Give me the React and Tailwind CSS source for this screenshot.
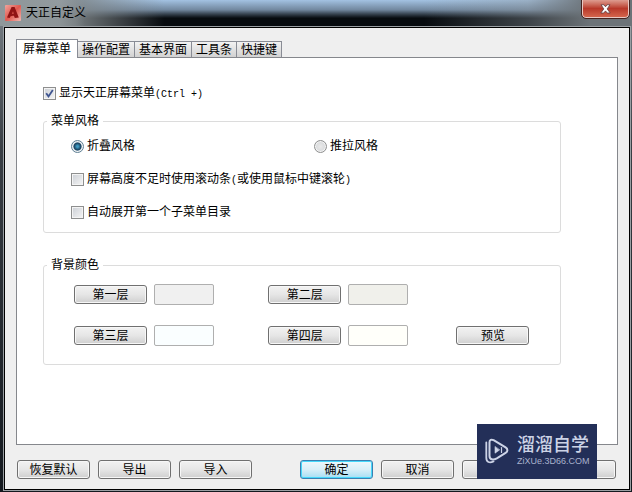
import { useState } from 'react';
import clsx from 'clsx';

const TABS = ['屏幕菜单', '操作配置', '基本界面', '工具条', '快捷键'];

export default function App() {
  const [tab, setTab] = useState(TABS[0]);
  const [showMenu, setShowMenu] = useState(true);
  const [menuStyle, setMenuStyle] = useState('fold');
  const [useScroll, setUseScroll] = useState(false);
  const [autoExpand, setAutoExpand] = useState(false);

  return (
    <div className="relative flex min-h-screen flex-col bg-linear-to-b from-[#7d848a] via-[#3a3f45] via-30% to-[#14191f] font-['Liberation_Sans','Noto_Sans_CJK_SC',sans-serif] text-xs leading-4 text-black">
      <TitleBar />
      <div className="mr-px mb-px ml-[3px] flex flex-1 flex-col border border-[#9a9fa3]">
        <main className="flex flex-1 flex-col border border-black bg-[#efefef] px-[11px] pt-[11px] pb-[10px]">
          <div role="tablist" className="flex items-end">
            {TABS.map((name) => (
              <button
                key={name}
                role="tab"
                aria-selected={tab === name}
                onClick={() => setTab(name)}
                className={clsx(
                  'border-[#898c95] whitespace-nowrap',
                  tab === name
                    ? 'relative z-10 h-[19px] border-t border-r border-l bg-white px-[6px]'
                    : 'h-[17px] border-t border-r border-b bg-linear-to-b from-[#f2f2f2] to-[#d2d2d2] px-1'
                )}
              >
                {name}
              </button>
            ))}
          </div>

          <section className="-mt-px flex-1 border border-[#85878c] bg-white pt-[27px] pr-14 pb-16 pl-[26px]">
            <Check checked={showMenu} onChange={setShowMenu}>
              显示天正屏幕菜单<Mono>(Ctrl +)</Mono>
            </Check>

            <fieldset className="mt-3 rounded-[3px] border border-[#dcdcdc] px-[3px] pb-3">
              <legend className="px-1">菜单风格</legend>
              <div className="flex flex-col gap-[17px] pt-[9px] pl-6">
                <div className="grid grid-cols-2">
                  <Radio value="fold" current={menuStyle} onChange={setMenuStyle}>折叠风格</Radio>
                  <Radio value="slide" current={menuStyle} onChange={setMenuStyle}>推拉风格</Radio>
                </div>
                <Check checked={useScroll} onChange={setUseScroll}>
                  屏幕高度不足时使用滚动条<Mono>(</Mono>或使用鼠标中键滚轮<Mono>)</Mono>
                </Check>
                <Check checked={autoExpand} onChange={setAutoExpand}>自动展开第一个子菜单目录</Check>
              </div>
            </fieldset>

            <fieldset className="mt-6 rounded-[3px] border border-[#dcdcdc] px-[3px] pb-[18px]">
              <legend className="px-1">背景颜色</legend>
              <div className="grid grid-cols-[195fr_189fr_101fr] gap-y-5 pt-[11px] pl-[27px]">
                <Layer label="第一层" color="bg-[#f0f0f0]" />
                <Layer label="第二层" color="bg-[#f0f0eb]" />
                <span />
                <Layer label="第三层" color="bg-[#fafeff]" />
                <Layer label="第四层" color="bg-[#fffffa]" />
                <div className="flex items-center"><Button>预览</Button></div>
              </div>
            </fieldset>
          </section>

          <footer className="flex justify-between pt-[15px] pr-[2px] pl-px">
            <div className="flex gap-2">
              <Button>恢复默认</Button>
              <Button>导出</Button>
              <Button>导入</Button>
            </div>
            <div className="flex gap-2">
              <Button primary>确定</Button>
              <Button>取消</Button>
              <Button aria-label="应用" />
              <Button aria-label="帮助" />
            </div>
          </footer>
        </main>
      </div>
      <Watermark />
    </div>
  );
}

function TitleBar() {
  return (
    <header className="h-[26px] bg-linear-to-b from-[#a3c2e2] via-[#71879e] via-38% to-[#070b0f] to-70%">
      <div className="flex h-full items-start justify-between bg-linear-to-r from-[#7f8689] via-[#7f8689]/90 via-12% to-transparent to-26%">
        <div className="flex h-full flex-1 items-center gap-[5px] bg-linear-to-r from-[#8f979a] via-[#a4abae]/50 via-14% to-transparent to-20% pl-[5px]">
          <Logo />
          <h1>天正自定义</h1>
        </div>
        <div className="flex h-full w-52 justify-end bg-linear-to-r from-transparent via-[#8f989f]/40 to-[#6c7378] to-80% pr-[3px]">
          <button
            aria-label="关闭"
            className="flex h-[18px] w-[47px] items-center justify-center rounded-b-[4px] border border-t-0 border-[#e8c9c4] bg-linear-to-b from-[#dd9c90] via-[#b8382a] via-50% to-[#d4644c] outline outline-[#46231f]"
          >
            <svg width="11" height="10" viewBox="0 0 11 10">
              <path d="M1 .8h3l1.5 2 1.5-2h3L7.2 4.9 10.2 9h-3L5.5 6.9 3.8 9h-3l3-4.1z" fill="#fff" stroke="#5e3a3c" strokeWidth=".8" />
            </svg>
          </button>
        </div>
      </div>
    </header>
  );
}

const Logo = () => (
  <svg width="16" height="16" viewBox="0 0 16 16">
    <defs>
      <linearGradient id="logo" x1="0" y1="0" x2="1" y2="1">
        <stop offset="0" stopColor="#f3a59d" />
        <stop offset=".5" stopColor="#e0584e" />
        <stop offset="1" stopColor="#f3b9b2" />
      </linearGradient>
    </defs>
    <rect width="16" height="16" rx="1" fill="url(#logo)" />
    <path d="M6.600 2h3L13.800 12.400l-4 .6-.9-2.200c-1.400-.4-2.500-.1-3.600.8l-.6 1.400-2.700-.6z" fill="#8f1414" />
    <path d="M8 6.200 8.900 8.900c-.8-.1-1.400 0-2.100.3z" fill="#d9584e" />
  </svg>
);

const Mono = ({ children }) => <span className="font-['Liberation_Mono',monospace] text-[10px] leading-none whitespace-pre">{children}</span>;

const Check = ({ checked, onChange, children }) => (
  <label className="flex h-4 w-fit items-center gap-[3px] whitespace-nowrap">
    <span className="grid">
      <input
        type="checkbox"
        checked={checked}
        onChange={(e) => onChange(e.target.checked)}
        className="peer col-start-1 row-start-1 size-[13px] appearance-none border border-[#8e8f8f] bg-linear-to-br from-[#cbcfd5] to-[#f6f6f6] shadow-[inset_0_0_0_1px_#f4f4f4]"
      />
      <svg viewBox="0 0 13 13" className="pointer-events-none invisible col-start-1 row-start-1 size-[13px] peer-checked:visible">
        <path d="M3.200 6.200 5.500 9.400 9.800 3" fill="none" stroke="#3f5590" strokeWidth="1.800" />
      </svg>
    </span>
    <span>{children}</span>
  </label>
);

const Radio = ({ value, current, onChange, children }) => (
  <label className="flex h-4 w-fit items-center gap-[3px] whitespace-nowrap">
    <input
      type="radio"
      name="menuStyle"
      checked={current === value}
      onChange={() => onChange(value)}
      className="size-[13px] appearance-none rounded-full border border-[#8e8f8f] bg-radial from-[#e9e9e9] to-[#cfd2d5] shadow-[inset_0_0_0_1px_#f4f4f4] checked:border-[#5f7f93] checked:from-[#3f9cc4] checked:from-10% checked:via-[#173f5c] checked:via-45% checked:to-[#d5e6ee] checked:to-60%"
    />
    <span>{children}</span>
  </label>
);

const Layer = ({ label, color }) => (
  <div className="flex items-center gap-[7px]">
    <Button>{label}</Button>
    <div className={clsx('h-[21px] w-[60px] rounded-[2px] border border-[#afafaf]', color)} />
  </div>
);

const Button = ({ primary, ...props }) => (
  <button
    className={clsx(
      'flex h-[19px] w-[73px] items-center justify-center rounded-[3px] border whitespace-nowrap',
      primary
        ? 'border-[#3c7fb1] bg-linear-to-b from-[#eef8fc] via-[#d9eff8] via-50% to-[#a6def4] shadow-[inset_0_0_0_1px_#46d8fb]'
        : 'border-[#707070] bg-linear-to-b from-[#f2f2f2] via-[#e6e6e6] via-50% to-[#cfcfcf] shadow-[inset_0_0_0_1px_#f7f7f7]'
    )}
    {...props}
  />
);

const Watermark = () => (
  <div className="absolute right-[35px] bottom-[13px] z-20 flex h-[55px] w-[120px] items-center gap-2 bg-[#232f58] pb-[2px] pl-2 text-[#ccd3e6]">
    <svg width="24" height="26" viewBox="0 0 24 26" fill="none" stroke="currentColor" strokeLinejoin="round" strokeLinecap="round">
      <path d="M4.500 4.500C4.500 1.800 6.300 1 8.600 2.200l12 7.200c2.400 1.500 2.400 4 0 5.500l-8.800 5.400c-3.800 2.200-7.300 1.400-7.300-2.600z" strokeWidth="2" />
      <path d="M1.300 4.500v15.300c0 4.300 3.200 5.800 7.200 3.600" strokeWidth="1.800" />
      <path d="M10 8.800v6.400l4.500-3.200z" fill="currentColor" strokeWidth=".6" />
      <path d="M16.500 9.500v5" strokeWidth="1.200" />
    </svg>
    <div>
      <p className="text-lg leading-5 font-medium">溜溜自学</p>
      <p className="text-[9px] leading-3 text-[#a9b2cd]">ZiXUe.3D66.COM</p>
    </div>
  </div>
);
